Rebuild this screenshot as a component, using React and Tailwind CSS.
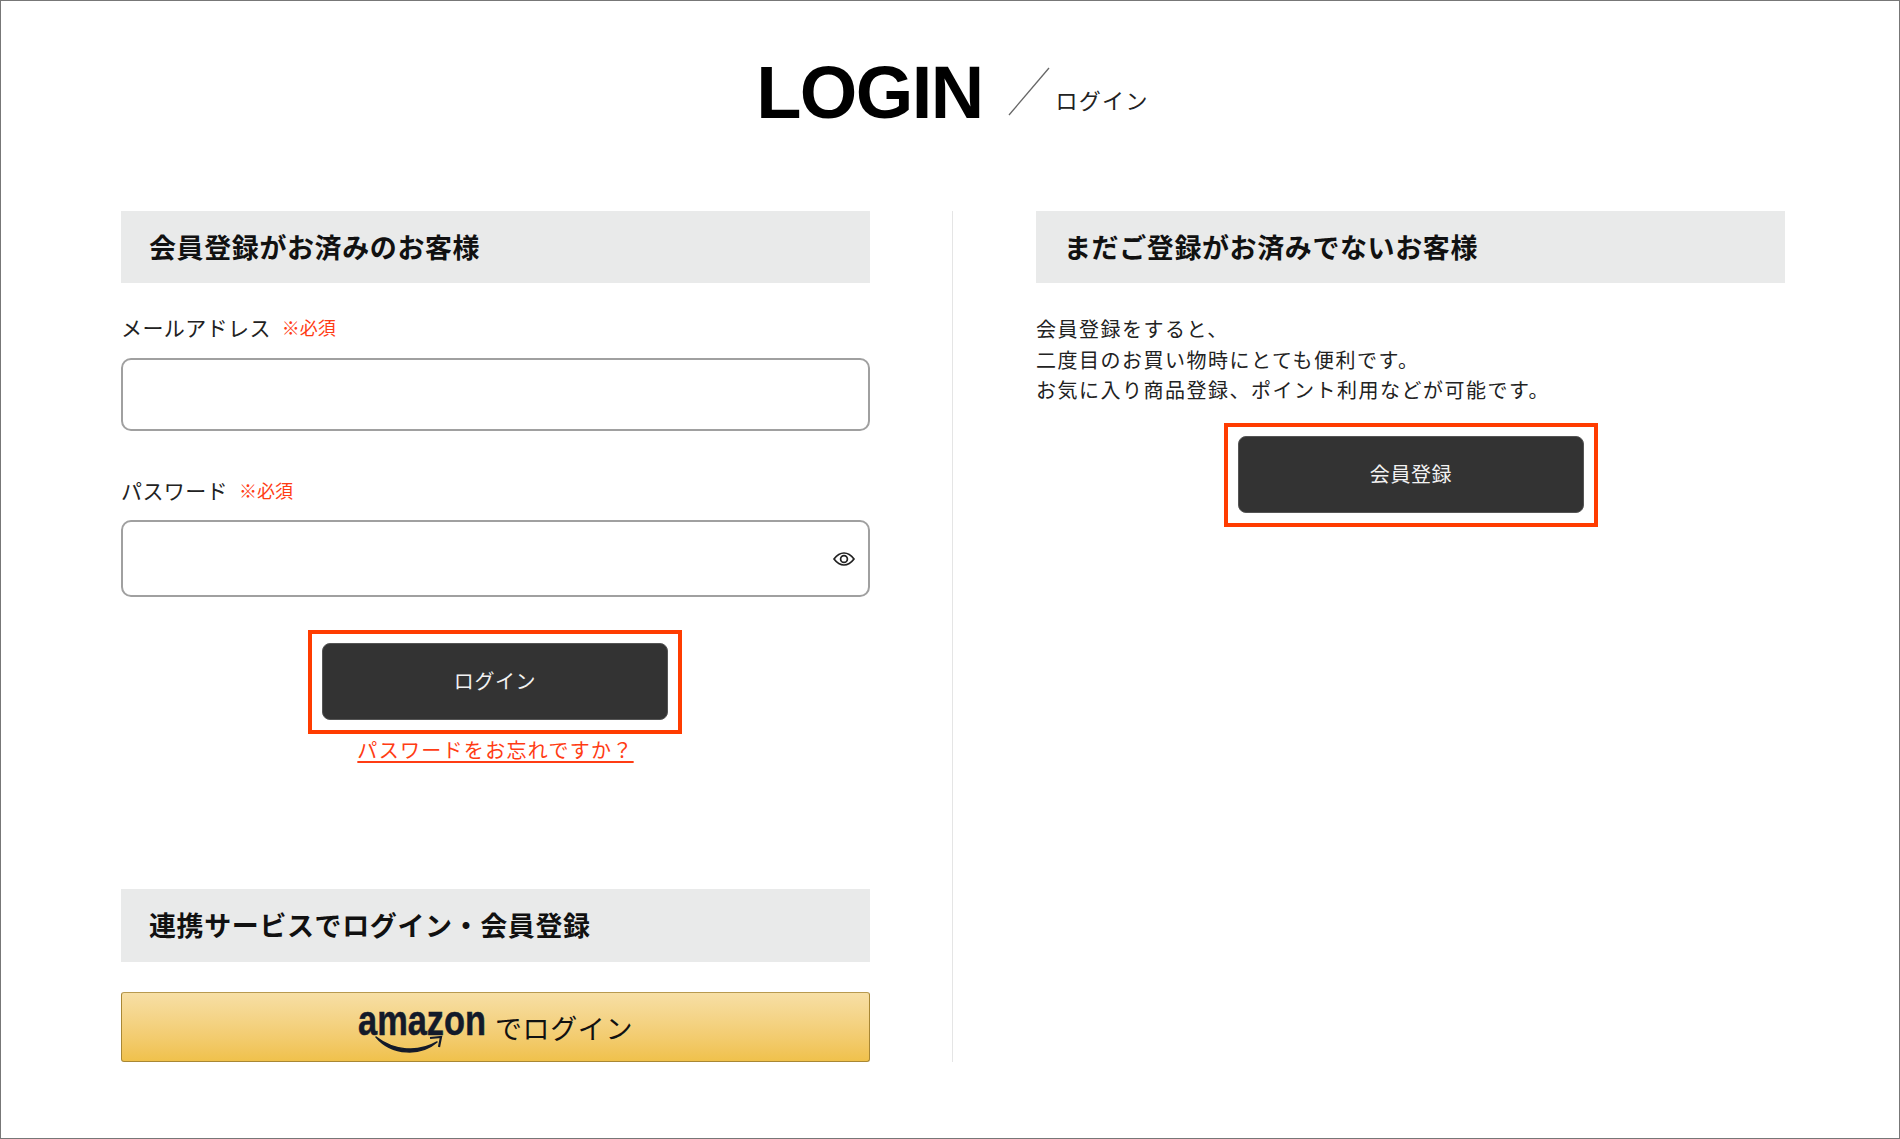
import React from 'react';

const JP = "font-['Liberation_Sans','Noto_Sans_CJK_JP',sans-serif]";

const SectionTitle = ({ children, className = 'h-[72px] pt-[5px]' }) => (
  <h2 className={`flex items-center bg-[#e9eaea] pl-[28px] text-[27px] font-bold leading-none tracking-[0.6px] text-[#111] ${className}`}>
    {children}
  </h2>
);

const FieldLabel = ({ children }) => (
  <label className="flex items-center text-[21px] leading-[30px] tracking-[0.4px] text-[#222]">
    <span>{children}</span>
    <span className="ml-[11px] text-[18px] tracking-normal text-[#ff3c14]">※必須</span>
  </label>
);

const DarkButton = ({ children, className }) => (
  <div className={`w-[374px] border-4 border-[#ff3c00] px-[10px] pb-[10px] pt-[9px] ${className}`}>
    <button className="flex h-[77px] w-full items-center justify-center rounded-[8px] border border-[#555] bg-[#333] pt-[1px] text-[20px] tracking-[0.6px] text-[#f2f2f2]">
      {children}
    </button>
  </div>
);

const EyeIcon = () => (
  <svg viewBox="0 0 22 14" className="h-[14px] w-[22px]" fill="none" stroke="#222" strokeWidth="1.7">
    <path d="M1 7C4 3 7 1 11 1s7 2 10 6c-3 4-6 6-10 6S4 11 1 7Z" />
    <circle cx="11" cy="7" r="3.4" />
  </svg>
);

const AmazonLogo = () => (
  <div className="relative h-[40px] w-[129px] shrink-0">
    <span className="block origin-left scale-x-[0.8] font-['Liberation_Sans',sans-serif] text-[43px] font-bold leading-[26px] text-[#131a2a] [-webkit-text-stroke:0.5px_#131a2a]">
      amazon
    </span>
    <svg viewBox="0 0 70 20" className="absolute left-[17px] top-[27px] h-[20px] w-[70px]">
      <path d="M1 3c18 14 42 16 61 5-16 14-45 14-61-5Z" fill="#131a2a" stroke="#131a2a" strokeWidth="1.5" strokeLinejoin="round" />
      <path d="M55 4l11-1-2 10" fill="none" stroke="#131a2a" strokeWidth="2.2" />
    </svg>
  </div>
);

export default function App() {
  return (
    <div className={`${JP} h-[1139px] w-[1900px] border border-[#777] bg-white text-[#222]`}>
      {/* title */}
      <header className="flex h-[210px] items-start justify-center pl-[5px] pt-[50px]">
        <h1 className="font-['Liberation_Sans',sans-serif] text-[74px] font-bold leading-[84px] tracking-[-0.022em] text-black">LOGIN</h1>
        <svg viewBox="0 0 42 49" className="ml-[26px] mt-[16px] h-[49px] w-[42px]" fill="none" stroke="#666" strokeWidth="1.3">
          <path d="M1 48 41 1" />
        </svg>
        <span className="ml-[5px] mt-[36px] text-[22px] leading-[30px] tracking-[1.3px]">ログイン</span>
      </header>

      <main className="flex pl-[120px] pr-[114px]">
        {/* left column */}
        <section className="w-[749px]">
          <SectionTitle>会員登録がお済みのお客様</SectionTitle>
          <div className="mt-[31px]">
            <FieldLabel>メールアドレス</FieldLabel>
            <div className="mt-[14px] h-[73px] rounded-[10px] border-2 border-[#a0a0a0]" />
          </div>
          <div className="mt-[46px]">
            <FieldLabel>パスワード</FieldLabel>
            <div className="mt-[13px] flex h-[77px] items-center justify-end rounded-[10px] border-2 border-[#a0a0a0] pr-[13px]">
              <EyeIcon />
            </div>
          </div>
          <div className="mt-[33px]">
            <DarkButton className="ml-[187px]">ログイン</DarkButton>
          </div>
          <p className="mt-[2px] text-center text-[20px] leading-[30px] tracking-[1.3px] text-[#ff3c14] underline underline-offset-[3px]">
            パスワードをお忘れですか？
          </p>
          <div className="mt-[123px]">
            <SectionTitle className="h-[73px] pt-[3px]">連携サービスでログイン・会員登録</SectionTitle>
          </div>
          <button className="mt-[30px] flex h-[70px] w-full items-start justify-center rounded-[3px] border border-[#a88734] border-t-[#b89a50] bg-gradient-to-b from-[#f7dfa5] to-[#f0c14b] pt-[14px]">
            <AmazonLogo />
            <span className="ml-[8px] mt-[6px] text-[27px] leading-[34px] tracking-[0.6px] text-[#111]">でログイン</span>
          </button>
        </section>

        {/* divider */}
        <div className="ml-[82px] mr-[83px] h-[851px] w-px bg-[#e5e5e5]" />

        {/* right column */}
        <section className="w-[749px]">
          <SectionTitle>まだご登録がお済みでないお客様</SectionTitle>
          <p className="mt-[32px] text-[20px] leading-[30.6px] tracking-[1.5px]">
            会員登録をすると、<br />
            二度目のお買い物時にとても便利です。<br />
            お気に入り商品登録、ポイント利用などが可能です。
          </p>
          <div className="mt-[16px]">
            <DarkButton className="ml-[188px]">会員登録</DarkButton>
          </div>
        </section>
      </main>
    </div>
  );
}
